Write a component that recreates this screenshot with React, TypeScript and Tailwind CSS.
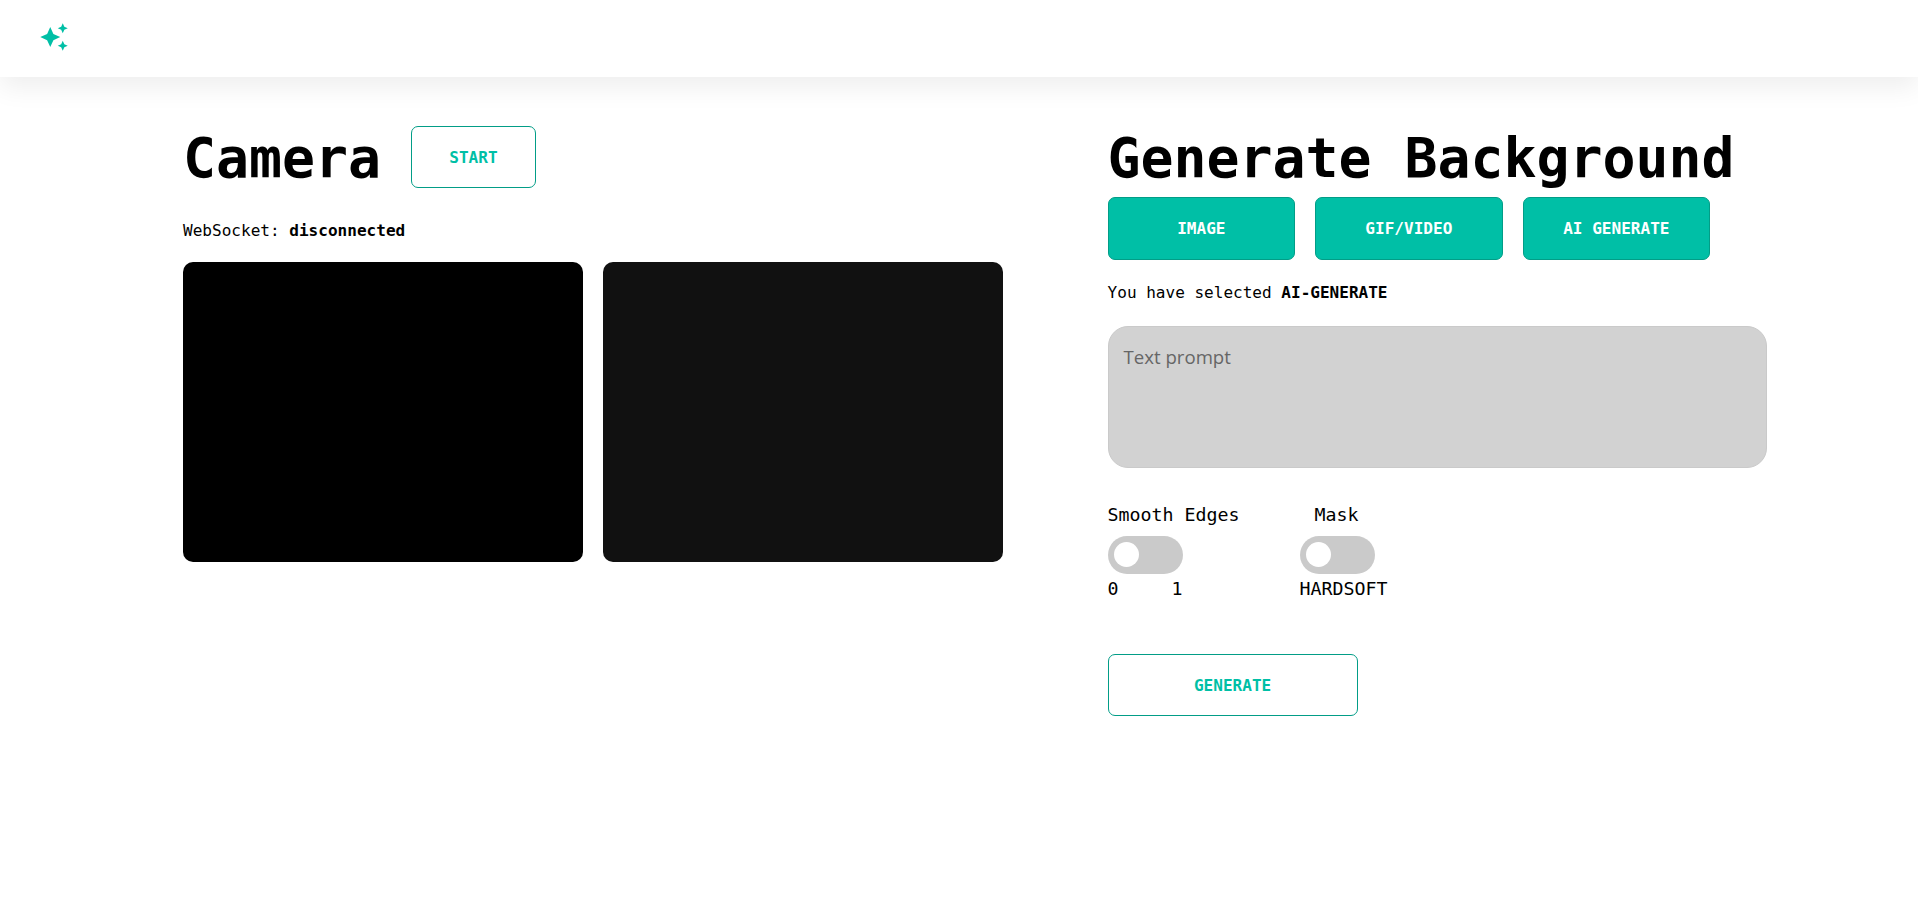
import type { ReactNode } from "react";
import { MdAutoAwesome } from "react-icons/md";

function Button({ children, className }: { children: ReactNode; className: string }) {
  return (
    <button type="button" className={`rounded-[7px] border border-[#029d87] pt-[2px] text-[16.06px] font-bold uppercase ${className}`}>
      {children}
    </button>
  );
}

const solid = "h-[63px] w-[187.5px] bg-[#00bfa6] text-white";
const outline = "h-[62px] bg-white text-[#00bfa6]";

function Toggle({ label, off, on, labelClass }: { label: string; off: string; on: string; labelClass?: string }) {
  return (
    <div className="flex flex-col items-start text-[18.27px] leading-[22px]">
      <span className={labelClass}>{label}</span>
      <div className="mt-[10px] flex h-[38px] w-[75px] items-start rounded-full bg-[#cacaca] pt-[6px] pl-[6px]">
        <div className="size-[25px] rounded-full bg-white" />
      </div>
      <div className="mt-[4px] flex w-[75px] justify-between">
        <span>{off}</span>
        <span>{on}</span>
      </div>
    </div>
  );
}

export default function App() {
  return (
    <div className="flex min-h-screen flex-col bg-white font-['DejaVu_Sans_Mono','Liberation_Mono',monospace] text-black">
      <header className="flex h-[77px] items-start bg-white pt-[22px] pl-[39px] shadow-[0_10px_25px_0_rgba(0,0,0,0.07)]">
        <MdAutoAwesome className="size-[30px] text-[#00bfa6]" />
      </header>
      <main className="flex items-start gap-[104.6px] pt-[49px] pl-[183px]">
        <section className="w-[820px]">
          <div className="flex h-[62px] items-center gap-[30px]">
            <h1 className="pt-[2px] text-[54.8px] leading-[62px] font-bold">Camera</h1>
            <Button className={`w-[125px] ${outline}`}>Start</Button>
          </div>
          <p className="mt-[33px] text-[16.06px] leading-[20px]">
            WebSocket: <b>disconnected</b>
          </p>
          <div className="mt-[21px] flex gap-[20px]">
            <div className="h-[300px] w-[400px] rounded-[10px] bg-black" />
            <div className="h-[300px] w-[400px] rounded-[10px] bg-[#111111]" />
          </div>
        </section>
        <section className="w-[659px]">
          <h1 className="pt-[1px] text-[54.8px] leading-[62px] font-bold whitespace-nowrap">Generate Background</h1>
          <div className="mt-[8px] flex gap-[20px]">
            <Button className={solid}>Image</Button>
            <Button className={solid}>GIF/Video</Button>
            <Button className={solid}>AI Generate</Button>
          </div>
          <p className="mt-[23px] text-[16.04px] leading-[20px]">
            You have selected <b>AI-GENERATE</b>
          </p>
          <textarea
            placeholder="Text prompt"
            className="mt-[23px] block h-[142px] w-[659px] resize-none rounded-[20px] border border-[#cacaca] bg-[#d2d2d2] px-[15px] py-[16px] font-['Open_Sans','Noto_Sans',sans-serif] text-[18.6px] leading-[27px] outline-none placeholder:text-[#666666]"
          />
          <div className="mt-[36px] flex gap-[60px]">
            <Toggle label="Smooth Edges" off="0" on="1" />
            <Toggle label="Mask" off="HARD" on="SOFT" labelClass="pl-[15px]" />
          </div>
          <Button className={`mt-[54px] w-[250px] ${outline}`}>Generate</Button>
        </section>
      </main>
    </div>
  );
}
